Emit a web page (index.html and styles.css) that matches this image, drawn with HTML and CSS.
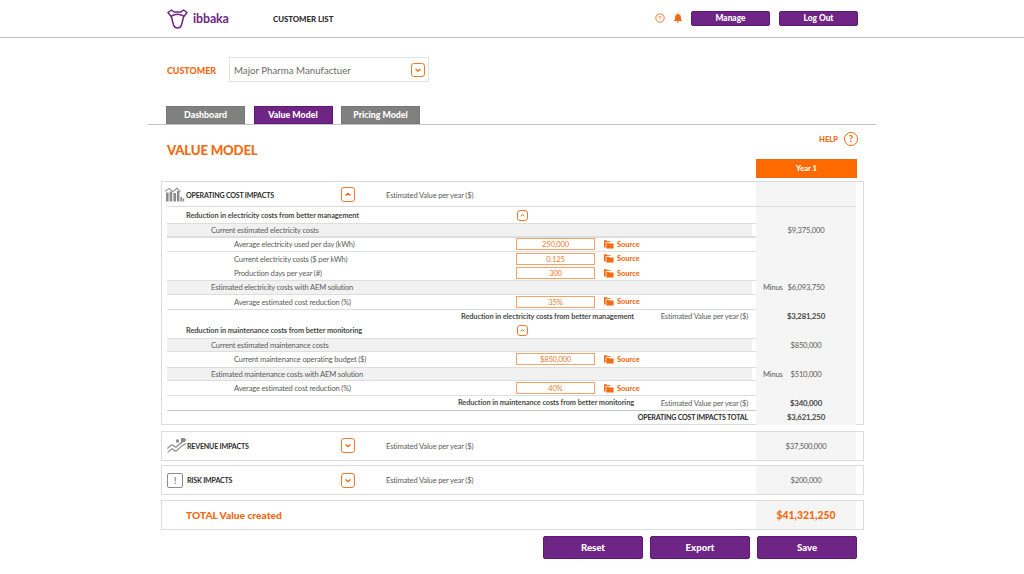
FILE: index.html
```html
<!DOCTYPE html>
<html lang="en">
<head>
    <meta charset="UTF-8">
    <title>Value Model</title>
    <link rel="stylesheet" href="styles.css">
</head>
<body>
    <header class="topbar">
        <div class="brand">
            <svg class="logo" viewBox="0 0 21 20" fill="none" stroke="#6f2585" stroke-width="1.5" stroke-linejoin="round" stroke-linecap="round">
                <path d="M1 3.5 L4.5 1 L7 3 H14 L16.5 1 L20 3.5 L16.5 8 L14.5 16 Q13.5 19 10.5 19 Q7.5 19 6.5 16 L4.5 8 Z"/>
                <path d="M4.5 7 Q10.5 3.5 16.5 7"/>
            </svg>
            <span class="brand-name">ibbaka</span>
        </div>
        <a class="nav-link">CUSTOMER LIST</a>
        <div class="top-actions">
            <svg class="top-icon" viewBox="0 0 10 10" fill="none"><circle cx="5" cy="5" r="4.2" stroke="#f26a12" stroke-width="0.9"/><text x="5" y="7.2" font-size="6" text-anchor="middle" fill="#f26a12" font-family="Liberation Sans">?</text></svg>
            <svg class="top-icon bell" viewBox="0 0 10 10" fill="#f26a12"><path d="M5 .4 Q5.8 .4 5.9 1.2 Q8 1.8 8 4.4 V6.4 L9.3 7.9 H.7 L2 6.4 V4.4 Q2 1.8 4.1 1.2 Q4.2 .4 5 .4 Z M3.8 8.5 H6.2 Q6 9.7 5 9.7 Q4 9.7 3.8 8.5 Z"/></svg>
            <button class="btn btn-small">Manage</button>
            <button class="btn btn-small">Log Out</button>
        </div>
    </header>

    <main class="page">
        <div class="customer-row">
            <label class="customer-label">CUSTOMER</label>
            <div class="customer-select">
                <span>Major Pharma Manufactuer</span>
                <span class="toggle toggle-small"><svg viewBox="0 0 10 10"><path d="M3 4.2 L5 6 L7 4.2"/></svg></span>
            </div>
        </div>

        <nav class="tabs">
            <a class="tab">Dashboard</a>
            <a class="tab active">Value Model</a>
            <a class="tab">Pricing Model</a>
        </nav>

        <section class="content">
            <div class="title-row">
                <h1>VALUE MODEL</h1>
                <div class="help">HELP <span class="help-circle">?</span></div>
            </div>
            <div class="year-row"><div class="year">Year 1</div></div>

            <div class="card card-open">
                <div class="card-head">
                    <svg class="card-icon" viewBox="0 0 20 15" fill="#8b8b8b">
                        <path d="M0 4 L4 1 L8 4 L12 .5 L16 4.5 L15.4 5.1 L12 2 L8 5.2 L4 2.2 L.5 4.8 Z"/>
                        <rect x="1" y="5.5" width="2.6" height="9"/><rect x="4.6" y="4.5" width="2.6" height="10"/><rect x="8.4" y="6" width="2.6" height="8.5"/><rect x="12" y="4" width="2.4" height="10.5"/><rect x="15.4" y="10" width="1.6" height="4.5"/><rect x="17.6" y="11.5" width="1.6" height="3"/>
                    </svg>
                    <span class="card-title">OPERATING COST IMPACTS</span>
                    <span class="toggle"><svg viewBox="0 0 10 10"><path d="M3 5.8 L5 4 L7 5.8"/></svg></span>
                    <span class="est">Estimated Value per year ($)</span>
                    <span class="value-cell"></span>
                </div>
                <div class="rows">
                    <div class="row section"><span class="label">Reduction in electricity costs from better management</span><span class="toggle toggle-row"><svg viewBox="0 0 10 10"><path d="M3 5.8 L5 4 L7 5.8"/></svg></span><span class="value-cell"></span></div>
                    <div class="row shaded"><span class="label lvl2">Current estimated electricity costs</span><span class="value-cell"><i></i><b>$9,375,000</b></span></div>
                    <div class="row input-row line"><span class="label lvl3">Average electricity used per day (kWh)</span><span class="input">250,000</span><a class="source"><svg viewBox="0 0 12 10"><path d="M0 0 H3 L4 1 H8 V2 H2 V8.5 H0 Z M2.8 2.8 H5.5 L6.5 3.8 H11.5 V9.8 H2.8 Z"/></svg>Source</a><span class="value-cell"></span></div>
                    <div class="row input-row line"><span class="label lvl3">Current electricity costs ($ per kWh)</span><span class="input">0.125</span><a class="source"><svg viewBox="0 0 12 10"><path d="M0 0 H3 L4 1 H8 V2 H2 V8.5 H0 Z M2.8 2.8 H5.5 L6.5 3.8 H11.5 V9.8 H2.8 Z"/></svg>Source</a><span class="value-cell"></span></div>
                    <div class="row input-row"><span class="label lvl3">Production days per year (#)</span><span class="input">300</span><a class="source"><svg viewBox="0 0 12 10"><path d="M0 0 H3 L4 1 H8 V2 H2 V8.5 H0 Z M2.8 2.8 H5.5 L6.5 3.8 H11.5 V9.8 H2.8 Z"/></svg>Source</a><span class="value-cell"></span></div>
                    <div class="row shaded"><span class="label lvl2">Estimated electricity costs with AEM solution</span><span class="value-cell"><i>Minus</i><b>$6,093,750</b></span></div>
                    <div class="row input-row"><span class="label lvl3">Average estimated cost reduction (%)</span><span class="input">35%</span><a class="source"><svg viewBox="0 0 12 10"><path d="M0 0 H3 L4 1 H8 V2 H2 V8.5 H0 Z M2.8 2.8 H5.5 L6.5 3.8 H11.5 V9.8 H2.8 Z"/></svg>Source</a><span class="value-cell"></span></div>
                    <div class="row summary line"><span class="sum-label">Reduction in electricity costs from better management</span><span class="sum-est">Estimated Value per year ($)</span><span class="value-cell strong"><i></i><b>$3,281,250</b></span></div>
                    <div class="row section"><span class="label">Reduction in maintenance costs from better monitoring</span><span class="toggle toggle-row"><svg viewBox="0 0 10 10"><path d="M3 5.8 L5 4 L7 5.8"/></svg></span><span class="value-cell"></span></div>
                    <div class="row shaded"><span class="label lvl2">Current estimated maintenance costs</span><span class="value-cell"><i></i><b>$850,000</b></span></div>
                    <div class="row input-row"><span class="label lvl3">Current maintenance operating budget ($)</span><span class="input">$850,000</span><a class="source"><svg viewBox="0 0 12 10"><path d="M0 0 H3 L4 1 H8 V2 H2 V8.5 H0 Z M2.8 2.8 H5.5 L6.5 3.8 H11.5 V9.8 H2.8 Z"/></svg>Source</a><span class="value-cell"></span></div>
                    <div class="row shaded"><span class="label lvl2">Estimated maintenance costs with AEM solution</span><span class="value-cell"><i>Minus</i><b>$510,000</b></span></div>
                    <div class="row input-row"><span class="label lvl3">Average estimated cost reduction (%)</span><span class="input">40%</span><a class="source"><svg viewBox="0 0 12 10"><path d="M0 0 H3 L4 1 H8 V2 H2 V8.5 H0 Z M2.8 2.8 H5.5 L6.5 3.8 H11.5 V9.8 H2.8 Z"/></svg>Source</a><span class="value-cell"></span></div>
                    <div class="row summary line"><span class="sum-label">Reduction in maintenance costs from better monitoring</span><span class="sum-est">Estimated Value per year ($)</span><span class="value-cell strong"><i></i><b>$340,000</b></span></div>
                    <div class="row summary total-line"><span class="sum-label total-label">OPERATING COST IMPACTS TOTAL</span><span class="value-cell semi"><i></i><b>$3,621,250</b></span></div>
                </div>
            </div>

            <div class="card card-closed">
                <svg class="card-icon" viewBox="0 0 20 15" fill="#8b8b8b">
                    <rect x="14" y="0" width="4" height="4"/><rect x="9" y="1.5" width="3" height="3"/>
                    <path d="M0 10 L5 6 L9 8.5 L14.5 3.5 L19 1 L19.5 2 L15 5 L9 10 L5 7.5 L.6 11 Z"/>
                    <path d="M0 14.6 L5 10 L9 12.6 L15 7 L19 5 L19.5 6 L15.6 8 L9 14 L5 11.6 L1.5 14.6 Z"/>
                </svg>
                <span class="card-title">REVENUE IMPACTS</span>
                <span class="toggle"><svg viewBox="0 0 10 10"><path d="M3 4.2 L5 6 L7 4.2"/></svg></span>
                <span class="est">Estimated Value per year ($)</span>
                <span class="value-cell plain">$37,500,000</span>
            </div>

            <div class="card card-closed card-risk">
                <span class="risk-icon">!</span>
                <span class="card-title">RISK IMPACTS</span>
                <span class="toggle"><svg viewBox="0 0 10 10"><path d="M3 4.2 L5 6 L7 4.2"/></svg></span>
                <span class="est">Estimated Value per year ($)</span>
                <span class="value-cell plain">$200,000</span>
            </div>

            <div class="card card-total">
                <span class="total-name">TOTAL Value created</span>
                <span class="value-cell total-value">$41,321,250</span>
            </div>

            <div class="actions">
                <button class="btn btn-big">Reset</button>
                <button class="btn btn-big">Export</button>
                <button class="btn btn-big">Save</button>
            </div>
        </section>
    </main>
</body>
</html>
```

FILE: styles.css
```css
* {
    box-sizing: border-box;
}

body {
    margin: 0;
    height: 574px;
    overflow: hidden;
    background: white;
    color: #5c5c5c;
    font-family: Lato, "Noto Sans", sans-serif;
    font-size: 7.6px;
    letter-spacing: -0.18px;
}

.topbar {
    height: 38px;
    display: flex;
    align-items: center;
    padding: 0 166px 0 167px;
    border-bottom: 1px solid #c4c4c4;
    letter-spacing: 0;
}

.brand {
    display: flex;
    align-items: center;
    width: 106px;
}

.logo {
    width: 21px;
    height: 20px;
    margin-right: 5px;
}

.brand-name {
    color: #6f2585;
    font-size: 12.4px;
    font-weight: 700;
    letter-spacing: -0.1px;
    margin-top: -1px;
}

.nav-link {
    color: #2c2c2c;
    font-size: 7.8px;
    font-weight: 900;
}

.top-actions {
    margin-left: auto;
    display: flex;
    align-items: center;
    margin-top: -1px;
}

.top-icon {
    width: 10px;
    height: 10px;
    margin-right: 8px;
}

.btn {
    background: #6f2585;
    color: white;
    border: 1px solid #5d1a72;
    border-radius: 2px;
    font-family: inherit;
    font-weight: 900;
    padding: 0;
}

.btn-small {
    width: 79px;
    height: 15px;
    font-size: 8.4px;
    margin-left: 9px;
}

.btn-small:first-of-type {
    margin-left: 0;
}

.btn-big {
    width: 100px;
    height: 23px;
    font-size: 9.6px;
}

.page {
    width: 728px;
    margin-left: 148px;
}

.customer-row {
    display: flex;
    align-items: center;
    padding: 19px 0 0 19px;
}

.customer-label {
    color: #f26a12;
    font-size: 8.9px;
    font-weight: 900;
    letter-spacing: 0;
    width: 62px;
    margin-top: 2px;
}

.customer-select {
    width: 200px;
    height: 25px;
    display: flex;
    align-items: center;
    justify-content: space-between;
    padding: 0 3px 0 4px;
    border: 1px solid #e2e2e2;
    color: #6b6b6b;
    font-size: 9.7px;
    letter-spacing: 0;
}

.toggle {
    width: 14px;
    height: 15px;
    border: 1px solid #ef7a2c;
    border-radius: 3px;
    display: block;
    flex: none;
}

.toggle svg {
    display: block;
    width: 100%;
    height: 100%;
    fill: none;
    stroke: #e8640f;
    stroke-width: 1.1;
}

.toggle-small {
    height: 14px;
}

.tabs {
    display: flex;
    gap: 8.5px;
    height: 18px;
    margin-top: 24px;
    padding-left: 18px;
}

.tab {
    width: 79px;
    height: 18px;
    background: #808080;
    border: 1px solid #777;
    color: white;
    font-size: 8.8px;
    font-weight: 900;
    letter-spacing: 0;
    text-align: center;
    line-height: 16px;
}

.tab.active {
    background: #6f2585;
    border-color: #5d1a72;
}

.content {
    border-top: 1px solid #c4c4c4;
    padding: 0 12px 0 13px;
}

.title-row {
    display: flex;
    justify-content: space-between;
    padding: 6px 6px 0 6px;
    height: 34px;
}

h1 {
    margin: 11px 0 0;
    color: #f26a12;
    font-size: 13.2px;
    font-weight: 900;
    letter-spacing: -0.2px;
    line-height: 16px;
}

.help {
    display: flex;
    align-items: center;
    height: 15px;
    gap: 6px;
    color: #f26a12;
    font-size: 7.6px;
    font-weight: 900;
    letter-spacing: 0;
}

.help-circle {
    width: 14px;
    height: 14px;
    border: 1px solid #f26a12;
    border-radius: 50%;
    text-align: center;
    font-size: 9.5px;
    line-height: 12px;
}

.year-row {
    display: flex;
    justify-content: flex-end;
    padding-right: 7px;
}

.year {
    width: 101px;
    height: 19px;
    background: #ff6a00;
    border: 1px solid #ef6a14;
    color: white;
    font-size: 7.6px;
    font-weight: 900;
    letter-spacing: 0;
    text-align: center;
    line-height: 17px;
}

.card {
    width: 703px;
    border: 1px solid #dcdcdc;
    padding-right: 7px;
    background: white;
}

.card-open {
    margin-top: 3px;
    height: 244px;
    padding-left: 5px;
}

.card-head {
    display: flex;
    align-items: center;
    height: 25px;
    padding-top: 1px;
    border-bottom: 1px solid #dcdcdc;
}

.card-head .value-cell {
    margin-top: -1px;
}

.card-head .card-icon {
    margin-left: -2px;
    margin-top: -1px;
}

.card-head .toggle {
    margin-top: -1px;
}

.card-icon {
    width: 20px;
    height: 15px;
    flex: none;
}

.card-title {
    color: #2c2c2c;
    font-size: 7.1px;
    font-weight: 700;
    letter-spacing: -0.2px;
    margin-left: 1px;
    margin-top: 1px;
    width: 155px;
    flex: none;
}

.est {
    margin-left: 31px;
    width: 370px;
    flex: none;
}

.value-cell {
    width: 100px;
    flex: none;
    margin-left: auto;
    align-self: stretch;
    background: #f5f5f5;
    display: grid;
    grid-template-columns: 1fr auto 1fr;
    align-items: center;
}

.value-cell i {
    font-style: normal;
    padding-left: 7px;
}

.value-cell b {
    font-weight: 400;
}

.value-cell.strong b {
    font-weight: 700;
    font-size: 7.8px;
    color: #4a4a4a;
}

.value-cell.semi b {
    font-weight: 700;
    font-size: 7.8px;
    color: #4a4a4a;
}

.rows {
    display: grid;
    grid-auto-rows: 14.42px;
    padding-top: 1.2px;
}

.row {
    display: flex;
    align-items: center;
}

.label {
    width: 349px;
    flex: none;
    padding-left: 19px;
}

.section .label {
    font-size: 7.4px;
    font-weight: 700;
    letter-spacing: -0.1px;
    color: #4a4a4a;
}

.lvl2 {
    padding-left: 44px;
}

.lvl3 {
    padding-left: 67px;
}

.shaded {
    background: linear-gradient(to right, #f1f1f1 585px, white 585px);
    border-top: 1px solid #dedede;
    border-bottom: 1px solid #dedede;
}

.line {
    box-shadow: inset 0 1px 0 #dedede;
}

.input-row .value-cell, .shaded .value-cell, .section .value-cell, .summary .value-cell {
    margin-top: -1px;
    margin-bottom: -1px;
}

.input {
    width: 79px;
    height: 12px;
    flex: none;
    border: 1px solid #f2a368;
    color: #ef7a2c;
    text-align: center;
    line-height: 10px;
}

.source {
    display: flex;
    align-items: center;
    margin-left: 9px;
    color: #f26a12;
    font-weight: 900;
    font-size: 7.4px;
    letter-spacing: 0;
}

.source svg {
    width: 10px;
    height: 9px;
    margin-right: 3px;
    fill: #f26a12;
}

.toggle-row {
    width: 11px;
    height: 11px;
    margin-left: 1px;
}

.sum-label {
    width: 467px;
    flex: none;
    text-align: right;
    font-size: 7.4px;
    font-weight: 700;
    letter-spacing: -0.1px;
    color: #4a4a4a;
}

.sum-est {
    width: 114px;
    flex: none;
    text-align: right;
}

.total-label {
    width: 581px;
    font-size: 7.1px;
    letter-spacing: -0.2px;
    color: #2c2c2c;
}

.total-line {
    box-shadow: inset 0 1px 0 #c9c9c9;
}

.card-closed, .card-total {
    display: flex;
    align-items: center;
    padding-left: 5px;
    height: 29.5px;
    margin-top: 5px;
}

.card-open + .card-closed {
    margin-top: 6px;
}

.card-closed .card-title {
    margin-left: 0;
    width: 154px;
}

.plain {
    text-align: center;
    display: block;
    line-height: 28px;
}

.risk-icon {
    width: 16px;
    height: 15px;
    flex: none;
    margin-right: 4px;
    border: 1.5px solid #8b8b8b;
    border-radius: 2px;
    color: #8b8b8b;
    font-size: 10px;
    font-weight: 700;
    text-align: center;
    line-height: 12px;
}

.card-closed.card-risk {
    height: 30px;
    margin-top: 4.5px;
}

.card-closed.card-risk .card-title {
    width: 154px;
}

.card-total {
    padding-top: 1px;
}

.total-name {
    padding-left: 19px;
    color: #f26a12;
    font-size: 10.2px;
    font-weight: 900;
    letter-spacing: 0;
}

.total-value {
    display: block;
    text-align: center;
    line-height: 28px;
    margin-top: -1px;
    color: #f26a12;
    font-size: 10.4px;
    font-weight: 900;
    letter-spacing: 0;
}

.actions {
    width: 696px;
    display: flex;
    justify-content: flex-end;
    gap: 7px;
    margin-top: 6px;
}
```
